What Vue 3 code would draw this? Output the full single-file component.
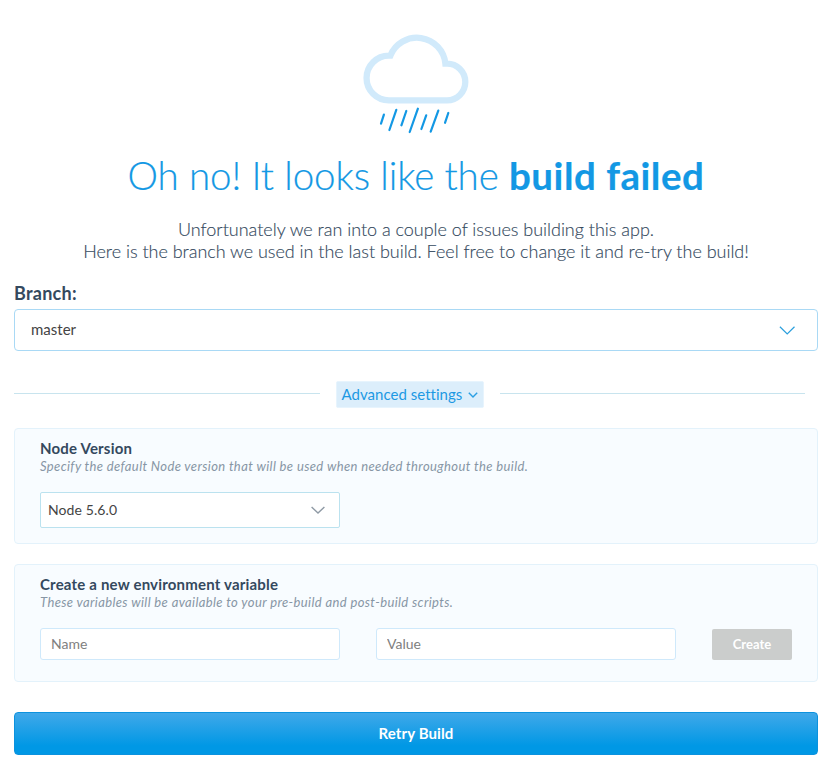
<script setup>
import { ref } from 'vue'

const branch = ref('master')
const nodeVersion = ref('Node 5.6.0')
const name = ref('')
const value = ref('')
</script>

<template>
  <main class="page">
    <svg class="cloud" viewBox="0 0 130 115" width="130" height="115" fill="none">
      <path d="M38.9 75.3A22.35 22.35 0 0 1 38.9 30.6L40.4 30.6A28.6 28.6 0 0 1 95.4 38.7L97 38.7A18.3 18.3 0 0 1 97 75.3Z" stroke="#d1eafb" stroke-width="6.3" />
      <path d="M33.9 89.6L31 98.6M46.3 84.8L39.4 105M56.3 86L51.4 100.3M67.9 83.7L59.7 107M76.2 90.3L71.4 104M88.3 85.6L80.7 106.6M98.3 88L95 97.8" stroke="#1398e4" stroke-width="2.2" stroke-linecap="round" />
    </svg>
    <h1>Oh no! It looks like the <strong>build failed</strong></h1>
    <p class="intro">Unfortunately we ran into a couple of issues building this app.<br>Here is the branch we used in the last build. Feel free to change it and re-try the build!</p>

    <div class="label">Branch:</div>
    <div class="select select-branch">
      <span>{{ branch }}</span>
      <svg width="16" height="9" viewBox="0 0 16 9" fill="none"><path d="M.9.8L8.2 7.9L15.5.8" stroke="#2b9fdd" stroke-width="1.2" /></svg>
    </div>

    <div class="divider">
      <i></i>
      <button class="advanced"><span>Advanced settings</span><svg width="10" height="6" viewBox="0 0 10 6" fill="none"><path d="M.8.7L5 4.9L9.2.7" stroke="#2a9fe3" stroke-width="1.4" /></svg></button>
      <i></i>
    </div>

    <section class="panel panel-node">
      <h2>Node Version</h2>
      <p class="hint">Specify the default Node version that will be used when needed throughout the build.</p>
      <div class="select select-node">
        <span>{{ nodeVersion }}</span>
        <svg width="14" height="8" viewBox="0 0 14 8" fill="none"><path d="M.6 1L7 7L13.4 1" stroke="#8f9aa5" stroke-width="1.4" /></svg>
      </div>
    </section>

    <section class="panel panel-env">
      <h2>Create a new environment variable</h2>
      <p class="hint">These variables will be available to your pre-build and post-build scripts.</p>
      <div class="row">
        <input v-model="name" placeholder="Name">
        <input v-model="value" placeholder="Value">
        <button class="create">Create</button>
      </div>
    </section>

    <button class="retry">Retry Build</button>
  </main>
</template>

<style>
body { background: #fff; }
</style>

<style scoped>
* { box-sizing: border-box; }
.page {
  height: 772px;
  padding: 25px 10px 0 14px;
  display: flex;
  flex-direction: column;
  font-family: Lato, "Open Sans", sans-serif;
  font-variant-ligatures: none;
  color: #34495e;
}
.cloud { margin-left: 336px; flex: none; }
h1 {
  margin: 8px 0 0;
  height: 54px;
  line-height: 54px;
  font-size: 38.5px;
  font-weight: 300;
  letter-spacing: -.1px;
  color: #1398e4;
  -webkit-text-stroke: .2px #1398e4;
  text-align: center;
  white-space: nowrap;
}
h1 strong { font-weight: 700; letter-spacing: .52px; }
.intro {
  margin: 16px 0 0;
  font-size: 18px;
  line-height: 22px;
  font-weight: 300;
  letter-spacing: -.02px;
  -webkit-text-stroke: .15px #34495e;
  text-align: center;
  white-space: nowrap;
}
.label {
  margin-top: 20px;
  height: 22px;
  line-height: 22px;
  font-size: 18px;
  font-weight: 700;
  letter-spacing: .25px;
}
.select {
  display: flex;
  align-items: center;
  justify-content: space-between;
  background: #fff;
  color: #444;
}
.select span { padding-bottom: 2px; }
.select-branch {
  margin-top: 5px;
  height: 42px;
  flex: none;
  padding: 0 22px 0 16px;
  border: 1px solid #a9d9f5;
  border-radius: 4px;
  font-size: 15px;
}
.divider {
  margin: 30px 13px 0 0;
  height: 27px;
  display: flex;
  align-items: center;
  gap: 16px;
}
.divider i { flex: 1; height: 1px; margin-bottom: 2px; background: #c8e4ee; }
button { border: 0; padding: 0; font-family: inherit; }
.advanced {
  width: 148px;
  height: 27px;
  display: flex;
  align-items: center;
  justify-content: space-between;
  padding: 0 5px;
  background: #dceefb;
  border: 1px solid #e7f4fd;
  border-radius: 2px;
  font-size: 15px;
  font-variant-ligatures: none;
  letter-spacing: .03px;
  color: #1d99e3;
}
.advanced span { padding-bottom: 2px; }
.advanced svg { margin-top: 1px; }
.panel {
  flex: none;
  padding: 11px 25px 0;
  background: #f8fcff;
  border: 1px solid #e3f2fb;
  border-radius: 4px;
}
.panel-node { margin-top: 20px; height: 116px; }
.panel-env { margin-top: 20px; height: 118px; }
h2 { margin: 0; font-size: 15px; line-height: 17px; font-weight: 700; letter-spacing: .19px; }
.hint {
  margin: 1px 0 0;
  font-size: 13px;
  line-height: 17px;
  font-style: italic;
  letter-spacing: .38px;
  color: #8796a5;
  white-space: nowrap;
}
.select-node {
  margin-top: 17px;
  width: 300px;
  height: 36px;
  padding: 0 14px 0 7px;
  border: 1px solid #bbe2ef;
  border-radius: 2px;
  font-size: 14px;
  letter-spacing: .1px;
}
.row { margin-top: 17px; display: flex; gap: 36px; }
input {
  width: 300px;
  height: 32px;
  padding: 0 10px 2px;
  border: 1px solid #cfe9fb;
  border-radius: 3px;
  background: #fff;
  font: 14px Lato, sans-serif;
  color: #444;
}
input::placeholder { color: #808080; opacity: 1; }
.create {
  width: 80px;
  height: 31px;
  margin-top: 1px;
  padding-bottom: 1px;
  border-radius: 2px;
  background: #cbcdcc;
  color: #fff;
  font-size: 13px;
  font-weight: 700;
}
.retry {
  flex: none;
  margin-top: 30px;
  height: 43px;
  padding-bottom: 2px;
  border: 1px solid #0c92de;
  border-radius: 4px;
  background: linear-gradient(#40a8e9, #0098e5 80%);
  color: #fff;
  font-size: 15px;
  font-weight: 700;
  letter-spacing: .1px;
}
</style>
